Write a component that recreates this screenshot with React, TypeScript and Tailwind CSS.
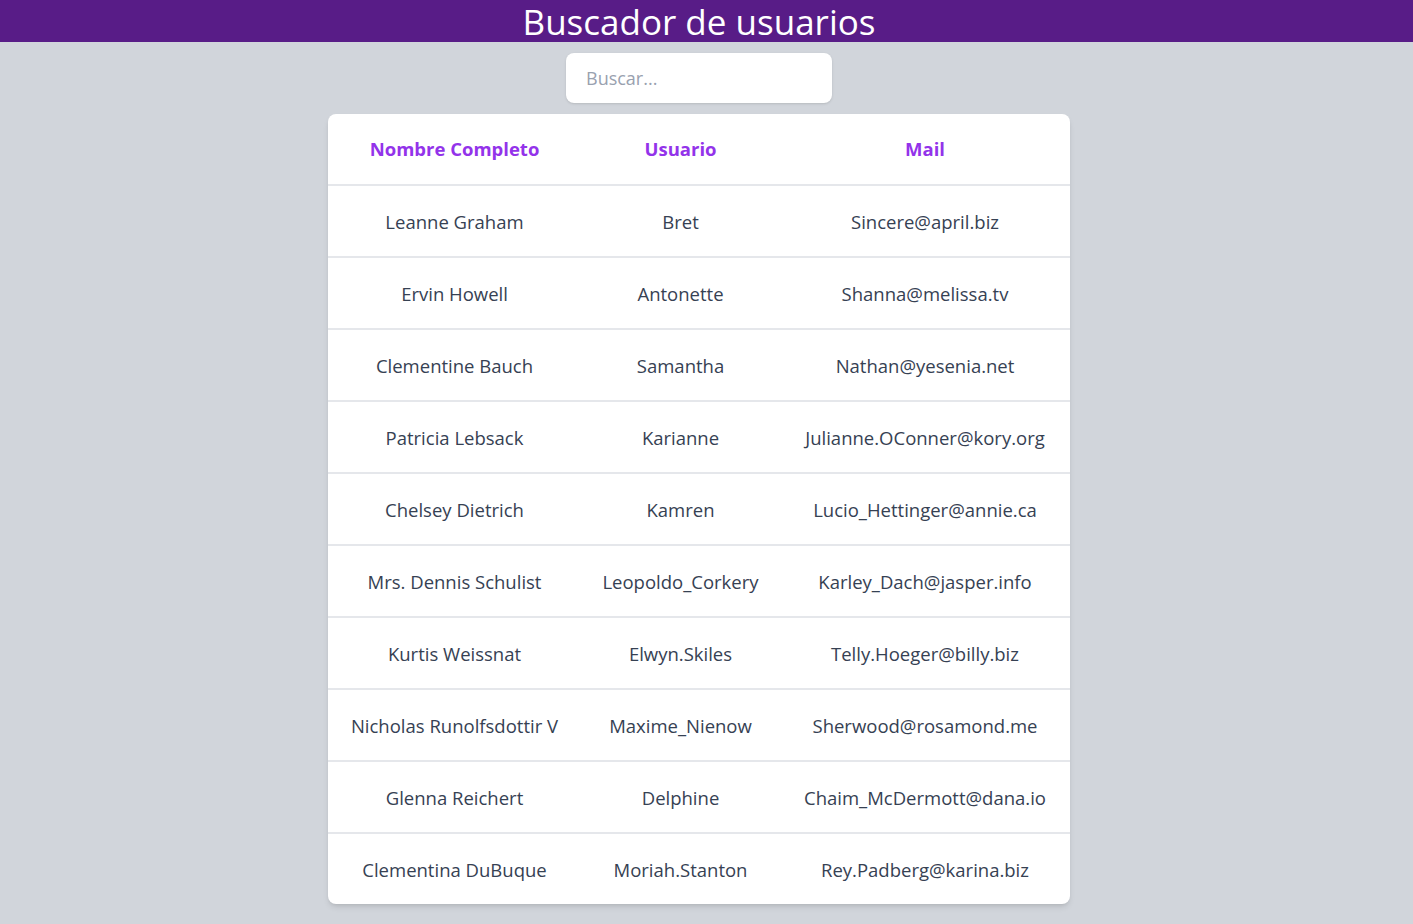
import React, { useState, useMemo } from 'react';

interface User {
  name: string;
  username: string;
  email: string;
}

const users: User[] = [
  { name: 'Leanne Graham', username: 'Bret', email: 'Sincere@april.biz' },
  { name: 'Ervin Howell', username: 'Antonette', email: 'Shanna@melissa.tv' },
  { name: 'Clementine Bauch', username: 'Samantha', email: 'Nathan@yesenia.net' },
  { name: 'Patricia Lebsack', username: 'Karianne', email: 'Julianne.OConner@kory.org' },
  { name: 'Chelsey Dietrich', username: 'Kamren', email: 'Lucio_Hettinger@annie.ca' },
  { name: 'Mrs. Dennis Schulist', username: 'Leopoldo_Corkery', email: 'Karley_Dach@jasper.info' },
  { name: 'Kurtis Weissnat', username: 'Elwyn.Skiles', email: 'Telly.Hoeger@billy.biz' },
  { name: 'Nicholas Runolfsdottir V', username: 'Maxime_Nienow', email: 'Sherwood@rosamond.me' },
  { name: 'Glenna Reichert', username: 'Delphine', email: 'Chaim_McDermott@dana.io' },
  { name: 'Clementina DuBuque', username: 'Moriah.Stanton', email: 'Rey.Padberg@karina.biz' },
];

const App: React.FC = () => {
  const [query, setQuery] = useState('');

  // Filter by name, username or email
  const filtered = useMemo(() => {
    const q = query.toLowerCase();
    return users.filter(
      u =>
        u.name.toLowerCase().includes(q) ||
        u.username.toLowerCase().includes(q) ||
        u.email.toLowerCase().includes(q)
    );
  }, [query]);

  return (
    <div className="min-h-screen bg-[#d1d5db] font-['Open_Sans',sans-serif]">
      <header className="h-[42px] bg-[#581c87] pt-[2px]">
        <div className="w-[1398px] flex justify-center">
          <h1 className="text-[35px] leading-[40px] text-white">Buscador de usuarios</h1>
        </div>
      </header>

      <div className="w-[1398px] flex flex-col items-center">
        <input
          type="text"
          value={query}
          onChange={e => setQuery(e.target.value)}
          placeholder="Buscar..."
          className="mt-[11px] h-[50px] w-[266px] rounded-lg bg-white px-5 text-lg text-gray-700 placeholder:text-gray-400 shadow-sm outline-none"
        />

        <div className="mt-[11px] w-[742px] rounded-lg bg-white shadow-md overflow-hidden">
          <table className="w-full table-fixed border-collapse text-center text-[18.5px]">
            <thead>
              <tr className="border-b-2 border-gray-200">
                <th className="w-[253px] py-[21px] leading-7 font-bold text-[#9333ea]">Nombre Completo</th>
                <th className="w-[199px] py-[21px] leading-7 font-bold text-[#9333ea]">Usuario</th>
                <th className="py-[21px] leading-7 font-bold text-[#9333ea]">Mail</th>
              </tr>
            </thead>
            <tbody>
              {filtered.map(u => (
                <tr key={u.username} className="border-b-2 border-gray-200 last:border-b-0">
                  <td className="py-[21px] pt-[22px] pb-[20px] leading-7 text-gray-700">{u.name}</td>
                  <td className="py-[21px] pt-[22px] pb-[20px] leading-7 text-gray-700">{u.username}</td>
                  <td className="py-[21px] pt-[22px] pb-[20px] leading-7 text-gray-700">{u.email}</td>
                </tr>
              ))}
            </tbody>
          </table>
        </div>
      </div>
    </div>
  );
};

export default App;
